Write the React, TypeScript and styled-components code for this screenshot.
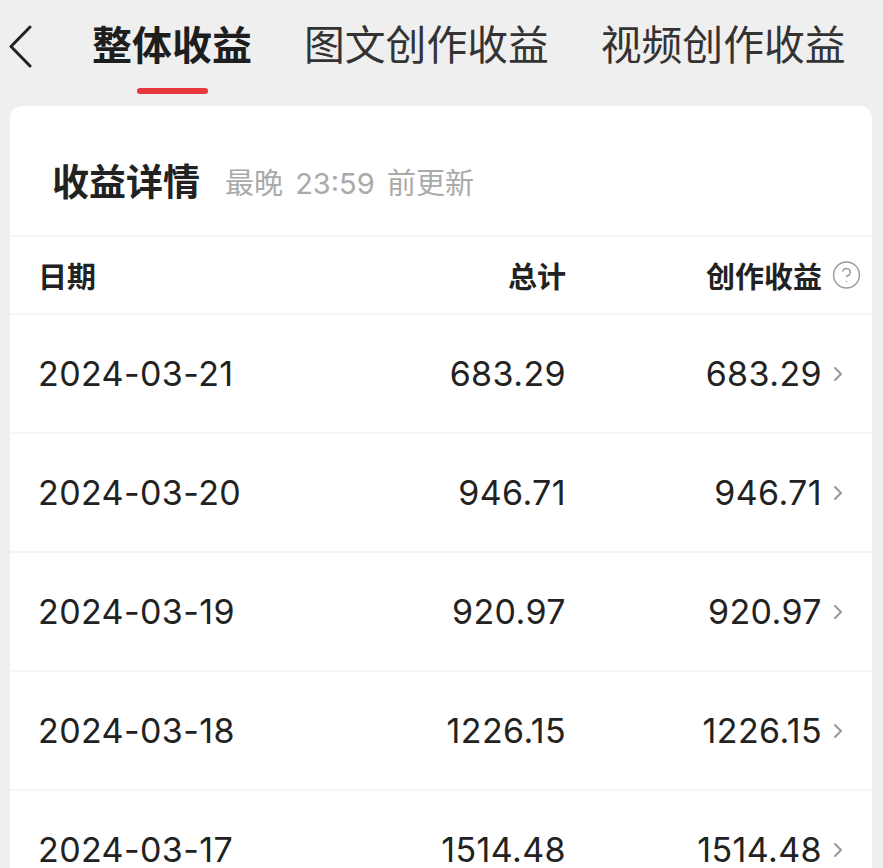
import React from "react";
import styled, { createGlobalStyle } from "styled-components";
import { CircleHelp } from "lucide-react";

const GlobalStyle = createGlobalStyle`
  html, body {
    margin: 0;
    padding: 0;
    background: #efefef;
  }
  body {
    font-family: "Inter", "Noto Sans CJK SC", sans-serif;
    color: #222;
  }
`;

const rows = [
  { date: "2024-03-21", total: "683.29", creation: "683.29" },
  { date: "2024-03-20", total: "946.71", creation: "946.71" },
  { date: "2024-03-19", total: "920.97", creation: "920.97" },
  { date: "2024-03-18", total: "1226.15", creation: "1226.15" },
  { date: "2024-03-17", total: "1514.48", creation: "1514.48" },
];

const tabs = ["整体收益", "图文创作收益", "视频创作收益"];

export default function App() {
  return (
    <Page>
      <GlobalStyle />
      {/* tabs */}
      <TopBar>
        <Back viewBox="0 0 25 43" width={25} height={43}>
          <polyline points="22,2 3,21.5 22,41" fill="none" stroke="#222" strokeWidth={3} strokeLinecap="round" strokeLinejoin="round" />
        </Back>
        <Tabs>
          {tabs.map((t, i) => (
            <Tab key={t}>
              <TabLabel $active={i === 0}>{t}</TabLabel>
              {i === 0 && <Indicator />}
            </Tab>
          ))}
        </Tabs>
      </TopBar>

      {/* detail card */}
      <Card>
        <TitleBar>
          <Title>收益详情</Title>
          <Sub>最晚 23:59 前更新</Sub>
        </TitleBar>
        <HeadRow>
          <DateCell $head>日期</DateCell>
          <TotalCell $head>总计</TotalCell>
          <CreateCell $head>创作收益</CreateCell>
          <Trail>
            <CircleHelp size={32} strokeWidth={1.1} color="#9a9a9a" />
          </Trail>
        </HeadRow>
        {rows.map((r) => (
          <Row key={r.date}>
            <DateCell>{r.date}</DateCell>
            <TotalCell>{r.total}</TotalCell>
            <CreateCell>{r.creation}</CreateCell>
            <Trail>
              <svg width={14} height={16} viewBox="0 0 14 16">
                <polyline points="4,2 10,8 4,14" fill="none" stroke="#999" strokeWidth={2} strokeLinecap="round" strokeLinejoin="round" />
              </svg>
            </Trail>
          </Row>
        ))}
      </Card>
    </Page>
  );
}

const Page = styled.div`
  width: 883px;
  height: 868px;
  overflow: hidden;
  background: #efefef;
`;

const TopBar = styled.div`
  display: flex;
  align-items: flex-start;
  height: 106px;
  box-sizing: border-box;
  padding: 23px 0 0 8px;
`;

const Back = styled.svg`
  margin-top: 2px;
  flex-shrink: 0;
`;

const Tabs = styled.div`
  display: flex;
  gap: 52px;
  margin-left: 59px;
`;

const Tab = styled.div`
  display: flex;
  flex-direction: column;
  align-items: center;
`;

const TabLabel = styled.span<{ $active?: boolean }>`
  font-family: "Noto Sans CJK SC", sans-serif;
  font-size: ${(p) => (p.$active ? "40px" : "40.8px")};
  line-height: 40px;
  font-weight: ${(p) => (p.$active ? 700 : 400)};
  color: ${(p) => (p.$active ? "#1e1e1e" : "#333")};
  white-space: nowrap;
`;

const Indicator = styled.div`
  width: 71px;
  height: 6px;
  border-radius: 3px;
  background: #e8383d;
  margin-top: 25px;
`;

const Card = styled.div`
  margin: 0 11px 0 10px;
  background: #fff;
  border-radius: 12px;
  overflow: hidden;
`;

const TitleBar = styled.div`
  height: 129px;
  box-sizing: border-box;
  padding: 56px 0 0 42px;
  display: flex;
  align-items: baseline;
  gap: 25px;
`;

const Title = styled.span`
  font-family: "Noto Sans CJK SC", sans-serif;
  font-size: 37px;
  line-height: 37px;
  font-weight: 700;
  color: #222;
`;

const Sub = styled.span`
  font-family: "Inter", "Noto Sans CJK SC", sans-serif;
  font-size: 29px;
  line-height: 29px;
  word-spacing: 4px;
  color: #aaa;
  position: relative;
  top: -2px;
`;

const RowBase = styled.div`
  display: flex;
  align-items: center;
  border-top: 2px solid #f5f5f5;
  padding: 0 10px 0 28px;
`;

const HeadRow = styled(RowBase)`
  height: 76px;
`;

const Row = styled(RowBase)`
  height: 117px;
`;

const Cell = styled.div<{ $head?: boolean }>`
  font-family: ${(p) =>
    p.$head ? '"Noto Sans CJK SC", sans-serif' : '"Inter", "Noto Sans CJK SC", sans-serif'};
  font-size: ${(p) => (p.$head ? "29px" : "34px")};
  font-weight: ${(p) => (p.$head ? 700 : 400)};
  letter-spacing: ${(p) => (p.$head ? "0" : "0.4px")};
  line-height: 1;
  color: #222;
  white-space: nowrap;
`;

const DateCell = styled(Cell)`
  flex: 1;
`;

const TotalCell = styled(Cell)`
  width: 200px;
  text-align: right;
`;

const CreateCell = styled(Cell)`
  width: 256px;
  text-align: right;
`;

const Trail = styled.div`
  width: 40px;
  display: flex;
  align-items: center;
  padding-left: 9px;
  box-sizing: border-box;
`;
